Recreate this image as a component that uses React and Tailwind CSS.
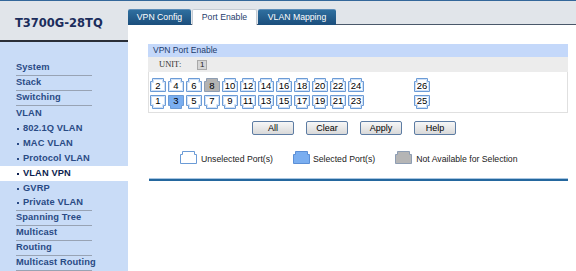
import React from "react";

const menu = [
  { label: "System", line: true },
  { label: "Stack", line: true },
  { label: "Switching", line: true },
  { label: "VLAN" },
  { label: "802.1Q VLAN", sub: true },
  { label: "MAC VLAN", sub: true },
  { label: "Protocol VLAN", sub: true },
  { label: "VLAN VPN", sub: true, active: true },
  { label: "GVRP", sub: true },
  { label: "Private VLAN", sub: true, line: true },
  { label: "Spanning Tree", line: true },
  { label: "Multicast", line: true },
  { label: "Routing", line: true },
  { label: "Multicast Routing", line: true },
];

function MenuItem({ label, sub, line, active }) {
  return (
    <div className={`h-[15px] pl-[16px] ${active ? "bg-white" : ""}`}>
      <div
        className={`flex h-full w-[76px] items-center whitespace-nowrap text-[9.3px] font-bold tracking-[0.1px] ${
          active ? "text-[#0d1f4f]" : "text-[#2a4b85]"
        } ${line ? "border-b border-[#98a3b4]" : ""}`}
      >
        {sub && <span className="mr-[4px] ml-[1px] h-[2px] w-[2px] bg-current" />}
        {label}
      </div>
    </div>
  );
}

// port icon: notch on top for the upper row, on the bottom for the lower row
function Port({ n, top, state }) {
  const fill = state === "sel" ? "#7aaef0" : state === "na" ? "#b3b3b3" : "#ffffff";
  const stroke = state === "na" ? "#8d9db3" : "#6b9bd6";
  const d = top
    ? "M0.5 13.5 V3.5 H2.5 V0.5 H13.5 V3.5 H15.5 V13.5 Z"
    : "M0.5 0.5 H15.5 V10.5 H13.5 V13.5 H2.5 V10.5 H0.5 Z";
  const inner = top
    ? "M1.5 12.5 V4.5 H3.5 V1.5 H12.5 V4.5 H14.5 V12.5 Z"
    : "M1.5 1.5 H14.5 V9.5 H12.5 V12.5 H3.5 V9.5 H1.5 Z";
  return (
    <div className="relative h-[14px] w-[16px]">
      <svg width="16" height="14" viewBox="0 0 16 14" className="absolute inset-0">
        <path d={d} fill={fill} stroke={stroke} />
        {state !== "sel" && state !== "na" && <path d={inner} fill="none" stroke="#cfe0f6" />}
      </svg>
      <span
        className={`absolute inset-x-0 text-center text-[9.5px] leading-[10px] text-black ${
          top ? "top-[3px]" : "top-[1px]"
        }`}
      >
        {n}
      </span>
    </div>
  );
}

function LegendIcon({ fill, stroke }) {
  return (
    <svg width="17" height="13" viewBox="0 0 17 13">
      <path d="M0.5 12.5 V3.5 H2.5 V0.5 H14.5 V3.5 H16.5 V12.5 Z" fill={fill} stroke={stroke} />
    </svg>
  );
}

export default function App() {
  const evens = [2, 4, 6, 8, 10, 12, 14, 16, 18, 20, 22, 24];
  const odds = [1, 3, 5, 7, 9, 11, 13, 15, 17, 19, 21, 23];

  return (
    <div className="flex h-[271px] w-[576px] overflow-hidden border-t border-[#33679a] bg-white font-['Liberation_Sans',Arial,sans-serif]">
      {/* sidebar */}
      <aside className="flex w-[128px] shrink-0 flex-col">
        <div className="h-[39px] bg-[#e1e5ea] pl-[15px] pt-[16px]">
          <div className="font-['DejaVu_Sans',Verdana,sans-serif] text-[11.5px] font-bold leading-[12px] text-[#1b2d5c]">
            T3700G-28TQ
          </div>
        </div>
        <div className="h-[2px] bg-[#2a2f38]" />
        <div className="flex-1 bg-[#c9dcf7] pt-[19px]">
          {menu.map((m) => (
            <MenuItem key={m.label} {...m} />
          ))}
        </div>
      </aside>

      {/* main */}
      <main className="flex flex-1 flex-col">
        <div className="flex h-[24px] items-end border-b border-[#4a586a] bg-[#e1e5ea]">
          <div className="-mb-px flex h-[16px] text-[8.7px]">
            <div className="flex w-[63px] items-center justify-center rounded-t-[2px] border-t border-[#5b8cb8] bg-gradient-to-b from-[#2f6f9f] to-[#1b4e7c] text-white">
              VPN Config
            </div>
            <div className="ml-px flex w-[65px] items-center justify-center rounded-t-[2px] border-x border-t border-[#c5ccd4] bg-white text-[#1f3d6d]">
              Port Enable
            </div>
            <div className="ml-px flex w-[78px] items-center justify-center rounded-t-[2px] border-t border-[#5b8cb8] bg-gradient-to-b from-[#2f6f9f] to-[#1b4e7c] text-white">
              VLAN Mapping
            </div>
          </div>
        </div>

        <div className="pl-[20px] pt-[19px]">
          <div className="w-[420px]">
            <div className="flex h-[13px] items-center bg-[#c4d8fa] pl-[5px] text-[8.5px] text-[#1d3b6c]">
              VPN Port Enable
            </div>
            <div className="flex h-[15px] items-center bg-[#ececec] pl-[11px]">
              <span className="font-['Liberation_Serif',serif] text-[8.5px] text-[#333]">UNIT:</span>
              <span className="ml-[16px] flex h-[10px] w-[10px] items-center justify-center border border-[#a9a9a9] bg-[#d6d6d6] text-[8px] leading-none text-[#222]">
                1
              </span>
            </div>
            <div className="flex flex-col gap-[3px] border-x border-b border-[#e0e0e0] pb-[3px] pl-[1px] pt-[6px]">
              <div className="flex">
                <div className="flex gap-[2px]">
                  {evens.map((n) => (
                    <Port key={n} n={n} top state={n === 8 ? "na" : ""} />
                  ))}
                </div>
                <div className="ml-[50px]">
                  <Port n={26} top />
                </div>
              </div>
              <div className="flex">
                <div className="flex gap-[2px]">
                  {odds.map((n) => (
                    <Port key={n} n={n} state={n === 3 ? "sel" : ""} />
                  ))}
                </div>
                <div className="ml-[50px]">
                  <Port n={25} />
                </div>
              </div>
            </div>

            <div className="mt-[8px] flex gap-[12px] pl-[104px]">
              {["All", "Clear", "Apply", "Help"].map((b) => (
                <button
                  key={b}
                  className="h-[14px] w-[42px] rounded-[2px] border border-[#5d7ca3] bg-gradient-to-b from-[#f7f7f7] to-[#d9d9d9] text-[9px] leading-none text-black"
                >
                  {b}
                </button>
              ))}
            </div>

            <div className="mt-[16px] flex items-end gap-[20px] pl-[32px] text-[8.7px] text-[#222]">
              <div className="flex items-end gap-[4px]">
                <LegendIcon fill="#ffffff" stroke="#6b9bd6" />
                <span className="leading-[10px]">Unselected Port(s)</span>
              </div>
              <div className="flex items-end gap-[3px]">
                <LegendIcon fill="#7aaef0" stroke="#5b8fd6" />
                <span className="leading-[10px]">Selected Port(s)</span>
              </div>
              <div className="flex items-end gap-[4px]">
                <LegendIcon fill="#b5b5b5" stroke="#8d9db3" />
                <span className="leading-[10px]">Not Available for Selection</span>
              </div>
            </div>

            <div className="ml-px mt-[14px] h-[3px] w-[419px] border-t border-[#a8c6e2] bg-[#24679e]" />
          </div>
        </div>
      </main>
    </div>
  );
}
